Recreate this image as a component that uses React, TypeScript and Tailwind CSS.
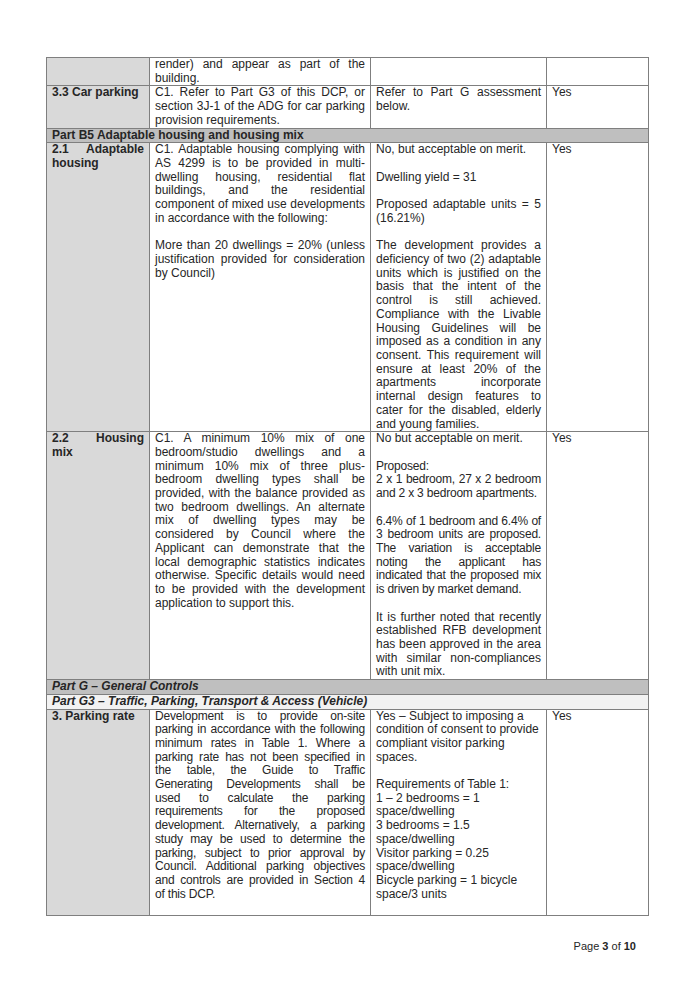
const cell = "border border-[#7f7f7f] px-[5px] align-top";
const head = `${cell} bg-[#d9d9d9] font-bold text-justify`;
const body = `${cell}`;

// each inner array is a paragraph, one string per line as broken in the document; [""] is an empty line
const Text = ({ paras, justify = true, tight = false }: { paras: string[][]; justify?: boolean; tight?: boolean }) => (
   <div className={tight ? "tracking-[-0.2px]" : ""}>
      {paras.map((lines, p) => (
         <p key={p} className="min-h-[13.75px]">
            {lines.map((line, i) => (
               <span
                  key={i}
                  className={justify && i < lines.length - 1 ? "block text-justify [text-align-last:justify]" : "block"}
               >
                  {line}
               </span>
            ))}
         </p>
      ))}
   </div>
);

const App = () => {
   return (
      <div className="min-h-[989px] w-[694px] bg-white pt-[57px] pl-[46px] font-['Liberation_Sans',Arial,sans-serif] text-[12px] leading-[13.7px] text-[#262626]">
         <table className="w-[602px] table-fixed border-collapse">
            <colgroup>
               <col className="w-[103px]" />
               <col className="w-[221px]" />
               <col className="w-[176px]" />
               <col className="w-[102px]" />
            </colgroup>
            <tbody>
               <tr>
                  <td className={head}></td>
                  <td className={body}>
                     <Text paras={[["render) and appear as part of the", "building."]]} />
                  </td>
                  <td className={body}></td>
                  <td className={body}></td>
               </tr>
               <tr>
                  <td className={head}>3.3 Car parking</td>
                  <td className={body}>
                     <Text paras={[["C1. Refer to Part G3 of this DCP, or", "section 3J-1 of the ADG for car parking", "provision requirements."]]} />
                  </td>
                  <td className={body}>
                     <Text paras={[["Refer to Part G assessment", "below."]]} />
                  </td>
                  <td className={body}>Yes</td>
               </tr>
               <tr>
                  <td colSpan={4} className={`${cell} bg-[#bfbfbf] font-bold`}>Part B5 Adaptable housing and housing mix</td>
               </tr>
               <tr>
                  <td className={head}>2.1 Adaptable housing</td>
                  <td className={body}>
                     <Text
                        paras={[
                           [
                              "C1. Adaptable housing complying with",
                              "AS 4299 is to be provided in multi-",
                              "dwelling housing, residential flat",
                              "buildings, and the residential",
                              "component of mixed use developments",
                              "in accordance with the following:",
                           ],
                           [""],
                           ["More than 20 dwellings = 20% (unless", "justification provided for consideration", "by Council)"],
                        ]}
                     />
                  </td>
                  <td className={body}>
                     <Text
                        paras={[
                           ["No, but acceptable on merit."],
                           [""],
                           ["Dwelling yield = 31"],
                           [""],
                           ["Proposed adaptable units = 5", "(16.21%)"],
                           [""],
                           [
                              "The development provides a",
                              "deficiency of two (2) adaptable",
                              "units which is justified on the",
                              "basis that the intent of the",
                              "control is still achieved.",
                              "Compliance with the Livable",
                              "Housing Guidelines will be",
                              "imposed as a condition in any",
                              "consent. This requirement will",
                              "ensure at least 20% of the",
                              "apartments incorporate",
                              "internal design features to",
                              "cater for the disabled, elderly",
                              "and young families.",
                           ],
                        ]}
                     />
                  </td>
                  <td className={body}>Yes</td>
               </tr>
               <tr>
                  <td className={head}>2.2 Housing mix</td>
                  <td className={body}>
                     <Text
                        paras={[
                           [
                              "C1. A minimum 10% mix of one",
                              "bedroom/studio dwellings and a",
                              "minimum 10% mix of three plus-",
                              "bedroom dwelling types shall be",
                              "provided, with the balance provided as",
                              "two bedroom dwellings. An alternate",
                              "mix of dwelling types may be",
                              "considered by Council where the",
                              "Applicant can demonstrate that the",
                              "local demographic statistics indicates",
                              "otherwise. Specific details would need",
                              "to be provided with the development",
                              "application to support this.",
                           ],
                        ]}
                     />
                  </td>
                  <td className={body}>
                     <Text paras={[["No but acceptable on merit."], [""]]} />
                     <Text
                        tight
                        paras={[
                           ["Proposed:"],
                           ["2 x 1 bedroom, 27 x 2 bedroom", "and 2 x 3 bedroom apartments."],
                           [""],
                           [
                              "6.4% of 1 bedroom and 6.4% of",
                              "3 bedroom units are proposed.",
                              "The variation is acceptable",
                              "noting the applicant has",
                              "indicated that the proposed mix",
                              "is driven by market demand.",
                           ],
                        ]}
                     />
                     <Text
                        paras={[
                           [""],
                           [
                              "It is further noted that recently",
                              "established RFB development",
                              "has been approved in the area",
                              "with similar non-compliances",
                              "with unit mix.",
                           ],
                        ]}
                     />
                  </td>
                  <td className={body}>Yes</td>
               </tr>
               <tr>
                  <td colSpan={4} className={`${cell} bg-[#bfbfbf] font-bold italic`}>Part G – General Controls</td>
               </tr>
               <tr>
                  <td colSpan={4} className={`${cell} bg-[#f2f2f2] font-bold italic`}>Part G3 – Traffic, Parking, Transport &amp; Access (Vehicle)</td>
               </tr>
               <tr>
                  <td className={head}>3. Parking rate</td>
                  <td className={body}>
                     <Text
                        tight
                        paras={[
                           [
                              "Development is to provide on-site",
                              "parking in accordance with the following",
                              "minimum rates in Table 1. Where a",
                              "parking rate has not been specified in",
                              "the table, the Guide to Traffic",
                              "Generating Developments shall be",
                              "used to calculate the parking",
                              "requirements for the proposed",
                              "development. Alternatively, a parking",
                              "study may be used to determine the",
                              "parking, subject to prior approval by",
                              "Council. Additional parking objectives",
                              "and controls are provided in Section 4",
                              "of this DCP.",
                           ],
                        ]}
                     />
                  </td>
                  <td className={body}>
                     <Text
                        justify={false}
                        paras={[
                           ["Yes – Subject to imposing a", "condition of consent to provide", "compliant visitor parking", "spaces."],
                           [""],
                           [
                              "Requirements of Table 1:",
                              "1 – 2 bedrooms = 1",
                              "space/dwelling",
                              "3 bedrooms = 1.5",
                              "space/dwelling",
                              "Visitor parking = 0.25",
                              "space/dwelling",
                              "Bicycle parking = 1 bicycle",
                              "space/3 units",
                           ],
                           [""],
                        ]}
                     />
                  </td>
                  <td className={body}>Yes</td>
               </tr>
            </tbody>
         </table>
         <div className="mt-[24px] w-[590px] text-right text-[11px]">
            Page <span className="font-bold">3</span> of <span className="font-bold">10</span>
         </div>
      </div>
   )
}

export default App
